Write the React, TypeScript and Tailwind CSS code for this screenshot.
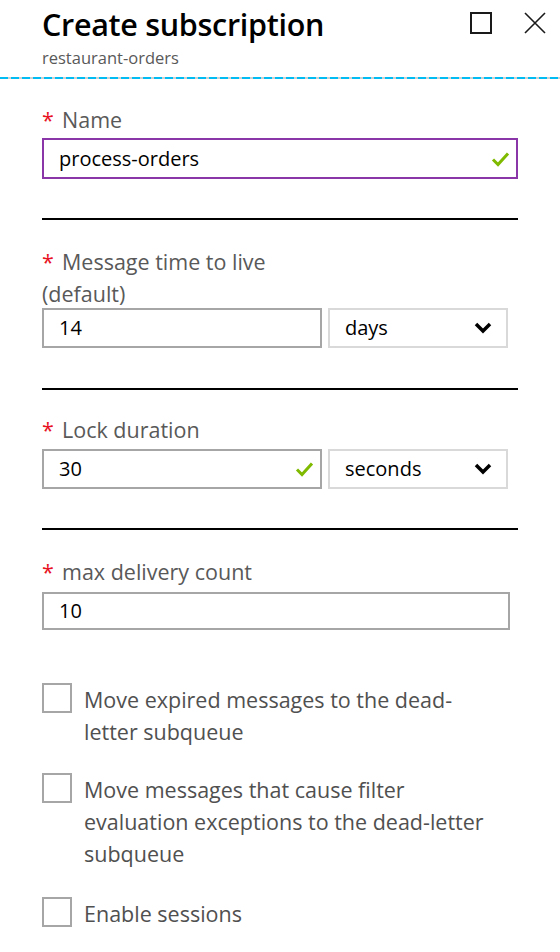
import React from "react";

const font = { fontFamily: '"Open Sans", "Noto Sans", sans-serif' };

function Check() {
  return (
    <svg width="19" height="16" viewBox="0 0 19 16" className="shrink-0">
      <path d="M2 8.5 L7 13.5 L17 2.5" fill="none" stroke="#7fba00" strokeWidth="3" />
    </svg>
  );
}

function Chevron() {
  return (
    <svg width="18" height="12" viewBox="0 0 18 12" className="shrink-0">
      <path d="M2 2 L9 9 L16 2" fill="none" stroke="#000" strokeWidth="3.5" />
    </svg>
  );
}

function Label({ children }: { children: React.ReactNode }) {
  return (
    <div className="flex whitespace-nowrap text-[21.5px] leading-[32px] text-[#595959]">
      <span className="w-[20px] shrink-0 text-[#e81123]">*</span>
      <span>{children}</span>
    </div>
  );
}

function Sep() {
  return <div className="h-[2px] w-[476px] bg-black" />;
}

function Dropdown({ value }: { value: string }) {
  return (
    <div className="flex h-[40px] w-[180px] items-center justify-between border-2 border-[#d9d9d9] pl-[15px] pr-[14px] text-[20px] text-black">
      <span>{value}</span>
      <Chevron />
    </div>
  );
}

function Checkbox({ lines, mt }: { lines: string[]; mt: string }) {
  return (
    <div className={`flex ${mt}`}>
      <div className="mt-[-1px] h-[30px] w-[30px] shrink-0 border-2 border-[#a6a6a6]" />
      <div className="ml-[12px] whitespace-nowrap text-[21.5px] leading-[32px] text-[#505050]">
        {lines.map((l, i) => (
          <div key={i}>{l}</div>
        ))}
      </div>
    </div>
  );
}

export default function App() {
  return (
    <div className="h-[952px] w-[560px] overflow-hidden bg-white" style={font}>
      <div className="flex items-start justify-between pl-[42px] pr-[14px] pt-[2px]">
        <div>
          <div className="whitespace-nowrap text-[30.5px] font-semibold leading-[44px] tracking-[-0.3px] text-black">Create subscription</div>
          <div className="mt-[1px] text-[16.5px] leading-[22px] text-[#595959]">restaurant-orders</div>
        </div>
        <div className="flex items-center gap-[32px] pt-[10px]">
          <div className="h-[22px] w-[22px] border-2 border-[#1a1a1a]" />
          <svg width="22" height="22" viewBox="0 0 22 22">
            <path d="M1 1 L21 21 M21 1 L1 21" stroke="#1a1a1a" strokeWidth="1.6" />
          </svg>
        </div>
      </div>
      <div
        className="mt-[8px] h-[2px] w-full"
        style={{ backgroundImage: "repeating-linear-gradient(90deg, #00bcf2 0 8px, #cfcfcf 8px 11px)" }}
      />

      <div className="pl-[42px]">
        <div className="mt-[25px]">
          <Label>Name</Label>
        </div>
        <div className="mt-[2px] flex h-[41px] w-[476px] items-center justify-between border-2 border-[#8a35a8] pl-[15px] pr-[6px] text-[20px] text-black">
          <span>process-orders</span>
          <Check />
        </div>
        <div className="mt-[39px]">
          <Sep />
        </div>

        <div className="mt-[26px]">
          <Label>Message time to live</Label>
          <div className="text-[21.5px] leading-[32px] text-[#595959]">(default)</div>
        </div>
        <div className="mt-[-2px] flex gap-[6px]">
          <div className="flex h-[40px] w-[280px] items-center border-2 border-[#a6a6a6] pl-[15px] text-[20px] text-black">14</div>
          <Dropdown value="days" />
        </div>
        <div className="mt-[40px]">
          <Sep />
        </div>

        <div className="mt-[24px]">
          <Label>Lock duration</Label>
        </div>
        <div className="mt-[3px] flex gap-[6px]">
          <div className="flex h-[40px] w-[280px] items-center justify-between border-2 border-[#a6a6a6] pl-[15px] pr-[6px] text-[20px] text-black">
            <span>30</span>
            <Check />
          </div>
          <Dropdown value="seconds" />
        </div>
        <div className="mt-[39px]">
          <Sep />
        </div>

        <div className="mt-[26px]">
          <Label>max delivery count</Label>
        </div>
        <div className="mt-[4px] flex h-[38px] w-[468px] items-center border-2 border-[#a6a6a6] pl-[15px] text-[20px] text-black">10</div>

        <Checkbox mt="mt-[54px]" lines={["Move expired messages to the dead-", "letter subqueue"]} />
        <Checkbox
          mt="mt-[26px]"
          lines={["Move messages that cause filter", "evaluation exceptions to the dead-letter", "subqueue"]}
        />
        <Checkbox mt="mt-[28px]" lines={["Enable sessions"]} />
      </div>
    </div>
  );
}
